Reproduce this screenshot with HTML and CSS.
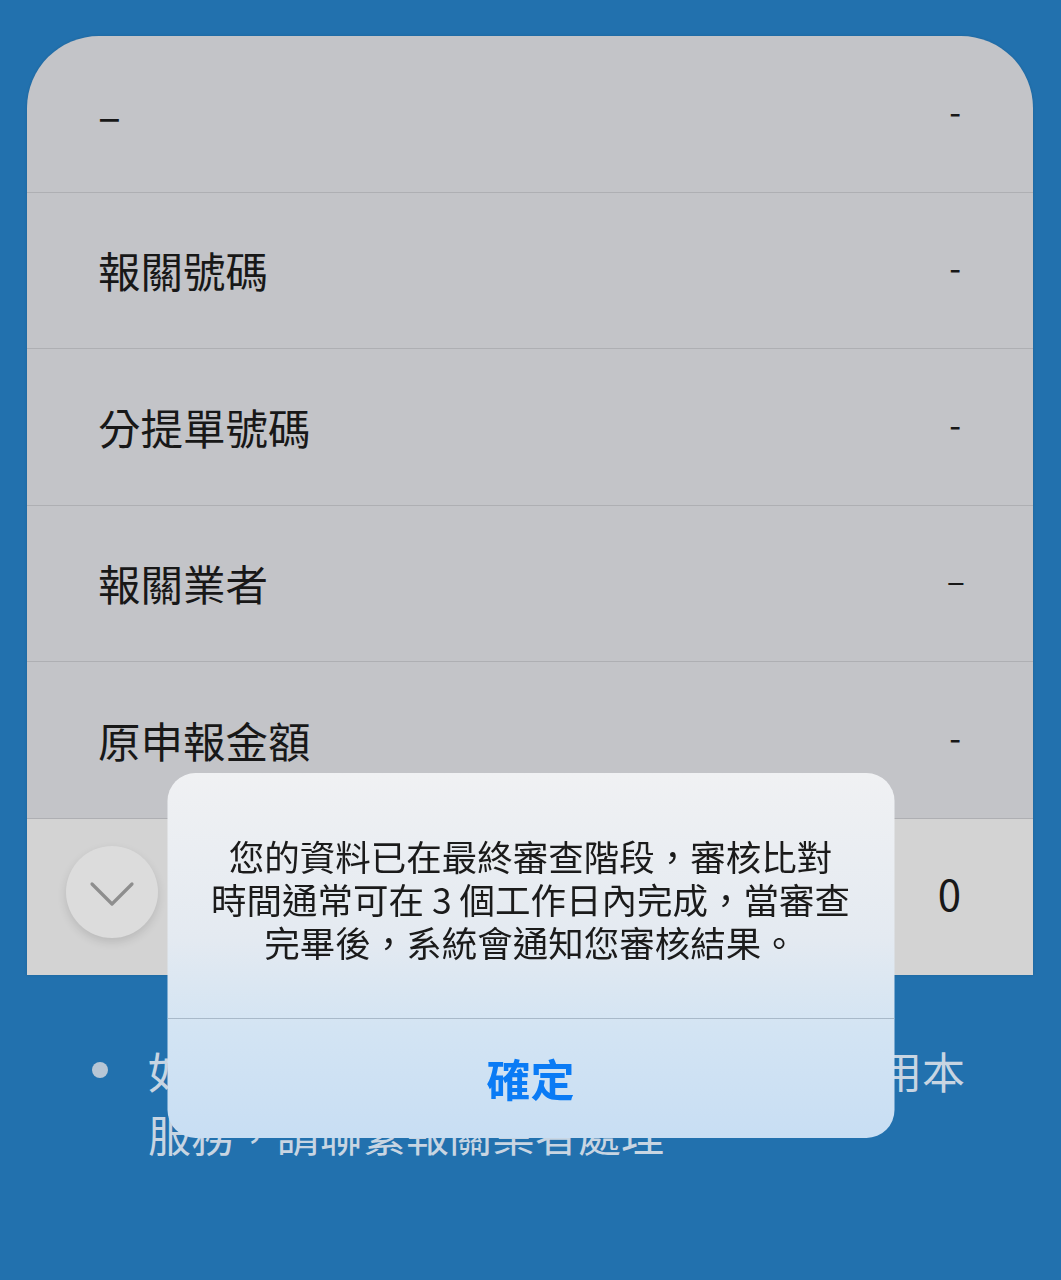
FILE: index.html
```html
<!DOCTYPE html>
<html lang="zh-Hant">
<head>
    <meta charset="UTF-8">
    <meta name="viewport" content="width=device-width, initial-scale=1.0">
    <title>報關資料</title>
    <link rel="stylesheet" href="styles.css">
</head>
<body>
    <div class="detail-card">
        <div class="detail-row">
            <span class="label">–</span>
            <span class="value">-</span>
        </div>
        <div class="detail-row">
            <span class="label">報關號碼</span>
            <span class="value">-</span>
        </div>
        <div class="detail-row">
            <span class="label">分提單號碼</span>
            <span class="value">-</span>
        </div>
        <div class="detail-row">
            <span class="label">報關業者</span>
            <span class="value value-dash">–</span>
        </div>
        <div class="detail-row">
            <span class="label">原申報金額</span>
            <span class="value">-</span>
        </div>
        <div class="detail-row detail-row-last">
            <button class="expand-btn" aria-label="展開">
                <svg width="46" height="28" viewBox="0 0 46 28">
                    <polyline points="3,4 23,24 43,4" fill="none" stroke="#8e8e8e" stroke-width="3.2" stroke-linecap="round" stroke-linejoin="round"/>
                </svg>
            </button>
            <span class="value value-num">0</span>
        </div>
    </div>

    <ul class="notes">
        <li>如您的資料有誤或有其他疑問而無法使用本服務，請聯繫報關業者處理</li>
    </ul>

    <!-- 審核提示視窗 -->
    <div class="alert">
        <div class="alert-message">
            您的資料已在最終審查階段，審核比對<br>
            時間通常可在 3 個工作日內完成，當審查<br>
            完畢後，系統會通知您審核結果。
        </div>
        <div class="alert-action">確定</div>
    </div>
</body>
</html>
```

FILE: styles.css
```css
/* 版面基本設定 */
* {
    margin: 0;
    padding: 0;
    box-sizing: border-box;
}
body {
    background: #2271ae;
    font-family: "Noto Sans CJK TC", "Noto Sans", sans-serif;
    min-height: 100vh;
    padding-top: 36px;
}
.detail-card {
    margin: 0 28px 0 27px;
    background-color: #c3c4c8;
    border-radius: 72px 72px 0 0;
    overflow: hidden;
    box-shadow: 0 0 3px rgba(0, 0, 0, 0.12);
}
.detail-row {
    height: 156.5px;
    display: flex;
    align-items: center;
    justify-content: space-between;
    padding: 0 72px 0 71px;
    border-bottom: 1px solid #aeafb3;
    color: #181818;
}
.detail-row .label {
    font-size: 42.5px;
    line-height: 1;
}
.detail-row .value {
    font-size: 34px;
    line-height: 1;
    margin-top: -6px;
}
.value-dash {
    margin-right: -4px;
}
/* 最後一列（應繳稅費） */
.detail-row-last {
    height: 156px;
    border-bottom: none;
    background-color: #d3d3d3;
    justify-content: flex-end;
    position: relative;
}
.detail-row .value-num {
    font-size: 42px;
    margin-top: -8px;
}
/* 展開按鈕 */
.expand-btn {
    position: absolute;
    left: 39px;
    top: 27px;
    width: 92px;
    height: 92px;
    border-radius: 50%;
    border: none;
    background: #dcdcdc;
    box-shadow: 0 4px 10px rgba(0, 0, 0, 0.12);
    display: flex;
    align-items: center;
    justify-content: center;
    padding-top: 4px;
}
.notes {
    list-style: none;
    margin: 64px 70px 0 148px;
    color: #c8d5e2;
    font-size: 43px;
    line-height: 63px;
}
.notes li {
    position: relative;
}
.notes li::before {
    content: "";
    position: absolute;
    left: -56px;
    top: 23px;
    width: 16px;
    height: 16px;
    border-radius: 50%;
    background: #b7c6d5;
}
/* 提示視窗 */
.alert {
    position: fixed;
    top: 773px;
    left: 50%;
    transform: translateX(-50%);
    width: 727px;
    border-radius: 28px;
    overflow: hidden;
    background: linear-gradient(to bottom, #f0f1f3 0%, #e4eaf1 45%, #d3e4f3 70%, #c8def3 100%);
}
.alert-message {
    height: 246px;
    padding-top: 61px;
    text-align: center;
    font-size: 35.5px;
    line-height: 43px;
    color: #1b1b1b;
    border-bottom: 1px solid #a8b9c9;
    white-space: nowrap;
}
.alert-action {
    height: 119px;
    display: flex;
    align-items: center;
    justify-content: center;
    color: #0a7bf5;
    font-size: 44px;
    font-weight: bold;
    padding-bottom: 2px;
}
```
